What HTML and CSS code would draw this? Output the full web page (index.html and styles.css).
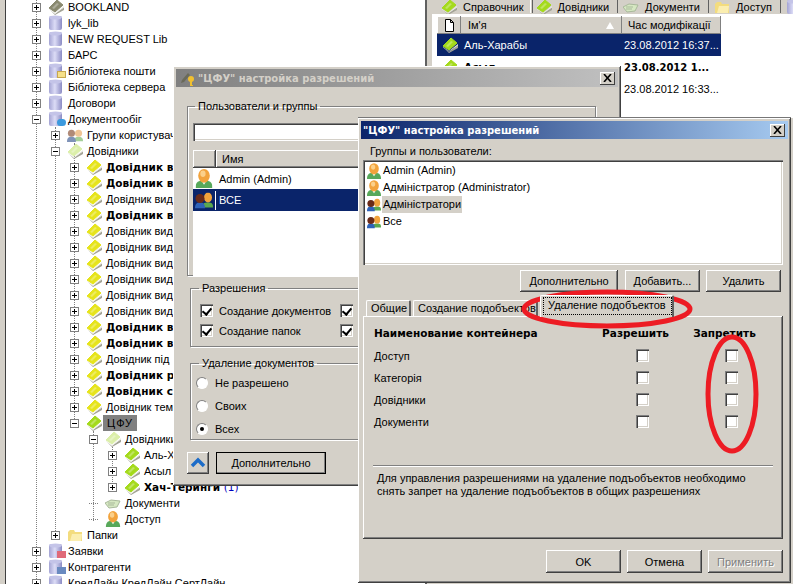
FILE: index.html
```html
<!DOCTYPE html>
<html>
<head>
  <title>ЦФУ настройка разрешений</title>
  <link rel="stylesheet" href="styles.css">
</head>
<body>
  <svg class="sprites" width="0" height="0">
    <defs>
      <linearGradient id="dbFill" x1="0" x2="1" y1="0" y2="0">
        <stop offset="0" stop-color="#a4a4d4"/>
        <stop offset="0.45" stop-color="#dcdcf6"/>
        <stop offset="1" stop-color="#8c8cc4"/>
      </linearGradient>
      <symbol id="book" viewBox="0 0 16 16">
        <path d="M2 11l5 4 9-7v3l-9 5z" fill="#a3a396"/>
        <path d="M1 10l6 4 9-7v1.500l-9 6-6-4z" fill="#ecece4"/>
        <path d="M1 9l8-8 6 5-8 7z" fill="currentColor" stroke="currentColor" stroke-linejoin="round"/>
        <path d="M4 9l5-5 2 1-5 5z" fill="#fff" opacity=".3"/>
      </symbol>
      <symbol id="db" viewBox="0 0 16 16">
        <rect x="1" y="1" width="13" height="14" rx="2" fill="url(#dbFill)"/>
        <ellipse cx="7.500" cy="2.500" rx="6.500" ry="2" fill="#c4c4e8"/>
      </symbol>
      <symbol id="user" viewBox="0 0 16 18">
        <path d="M0 18c0-6 3-7 8-7s8 1 8 7z" fill="#58a85a"/>
        <path d="M5.500 11l2.500 4 2.500-4z" fill="#fff"/>
        <ellipse cx="8" cy="6.500" rx="5.500" ry="6.500" fill="#f2a33c"/>
        <ellipse cx="7" cy="4.500" rx="2.500" ry="3" fill="#fbd08a"/>
      </symbol>
      <symbol id="group" viewBox="0 0 18 16">
        <path d="M7 15c0-4 2-5 6-5s5 1 5 5z" fill="#5aa84e"/>
        <ellipse cx="13" cy="5" rx="4" ry="5" fill="#f2a33c"/>
        <path d="M0 16c0-5 2-6 5-6s5 1 5 6z" fill="#2e62b8"/>
        <circle cx="5" cy="6" r="4.500" fill="#6a2a18"/>
      </symbol>
      <symbol id="people" viewBox="0 0 18 16">
        <path d="M8 15c0-4 2-5 5-5s5 1 5 5z" fill="#a5cf98"/>
        <circle cx="13" cy="6" r="4" fill="#f0c596"/>
        <path d="M0 16c0-5 2-6 5-6s5 1 5 6z" fill="#7f93b8"/>
        <circle cx="5" cy="6" r="4" fill="#b08a78"/>
      </symbol>
      <symbol id="pages" viewBox="0 0 16 16">
        <path d="M0 8l6-3 9 1-3 6-8 1z" fill="#d6e8c2" stroke="#a9b99b"/>
        <path d="M3 8h7M3 10h6" stroke="#a9b99b"/>
      </symbol>
      <symbol id="folder" viewBox="0 0 16 16">
        <path d="M1 14V5l2-2h4l1 2h7v9z" fill="#f3dc7e"/>
        <path d="M3 14l2-7h10l-1 7z" fill="#fbeeb0"/>
      </symbol>
    </defs>
  </svg>

  <div class="desk">
    <div class="left-edge"></div>

    <div class="tree">
      <i class="guide guide-0"></i>
      <i class="guide guide-1"></i>
      <i class="guide guide-2"></i>
      <i class="guide guide-3"></i>
      <i class="guide guide-4"></i>

      <div class="row l0"><span class="exp plus"></span><svg class="ic book-dark"><use href="#book"/></svg><span class="label">BOOKLAND</span></div>
      <div class="row l0"><span class="exp plus"></span><svg class="ic"><use href="#db"/></svg><span class="label">lyk_lib</span></div>
      <div class="row l0"><span class="exp plus"></span><svg class="ic"><use href="#db"/></svg><span class="label">NEW REQUEST Lib</span></div>
      <div class="row l0"><span class="exp plus"></span><svg class="ic"><use href="#db"/></svg><span class="label">БАРС</span></div>
      <div class="row l0"><span class="exp plus"></span><svg class="ic"><use href="#db"/></svg><i class="badge badge-mail"></i><span class="label">Бібліотека пошти</span></div>
      <div class="row l0"><span class="exp plus"></span><svg class="ic"><use href="#db"/></svg><span class="label">Бібліотека сервера</span></div>
      <div class="row l0"><span class="exp plus"></span><svg class="ic"><use href="#db"/></svg><span class="label">Договори</span></div>
      <div class="row l0"><span class="exp minus"></span><svg class="ic"><use href="#db"/></svg><i class="badge badge-blue"></i><span class="label">Документообіг</span></div>
      <div class="row l1"><span class="exp plus"></span><svg class="ic"><use href="#people"/></svg><span class="label">Групи користувачів</span></div>
      <div class="row l1"><span class="exp minus"></span><svg class="ic book-pale"><use href="#book"/></svg><span class="label">Довідники</span></div>
      <div class="row l2"><span class="exp plus"></span><svg class="ic book-yellow"><use href="#book"/></svg><span class="label bold">Довідник видів</span></div>
      <div class="row l2"><span class="exp plus"></span><svg class="ic book-yellow"><use href="#book"/></svg><span class="label bold">Довідник видів</span></div>
      <div class="row l2"><span class="exp plus"></span><svg class="ic book-yellow"><use href="#book"/></svg><span class="label">Довідник видів</span></div>
      <div class="row l2"><span class="exp plus"></span><svg class="ic book-yellow"><use href="#book"/></svg><span class="label bold">Довідник видів</span></div>
      <div class="row l2"><span class="exp plus"></span><svg class="ic book-yellow"><use href="#book"/></svg><span class="label">Довідник видів</span></div>
      <div class="row l2"><span class="exp plus"></span><svg class="ic book-yellow"><use href="#book"/></svg><span class="label">Довідник видів</span></div>
      <div class="row l2"><span class="exp plus"></span><svg class="ic book-yellow"><use href="#book"/></svg><span class="label">Довідник видів</span></div>
      <div class="row l2"><span class="exp plus"></span><svg class="ic book-yellow"><use href="#book"/></svg><span class="label">Довідник видів</span></div>
      <div class="row l2"><span class="exp plus"></span><svg class="ic book-yellow"><use href="#book"/></svg><span class="label">Довідник видів</span></div>
      <div class="row l2"><span class="exp plus"></span><svg class="ic book-yellow"><use href="#book"/></svg><span class="label">Довідник видів</span></div>
      <div class="row l2"><span class="exp plus"></span><svg class="ic book-yellow"><use href="#book"/></svg><span class="label bold">Довідник видів</span></div>
      <div class="row l2"><span class="exp plus"></span><svg class="ic book-yellow"><use href="#book"/></svg><span class="label bold">Довідник видів</span></div>
      <div class="row l2"><span class="exp plus"></span><svg class="ic book-yellow"><use href="#book"/></svg><span class="label">Довідник під</span></div>
      <div class="row l2"><span class="exp plus"></span><svg class="ic book-yellow"><use href="#book"/></svg><span class="label bold">Довідник р</span></div>
      <div class="row l2"><span class="exp plus"></span><svg class="ic book-yellow"><use href="#book"/></svg><span class="label bold">Довідник с</span></div>
      <div class="row l2"><span class="exp plus"></span><svg class="ic book-yellow"><use href="#book"/></svg><span class="label">Довідник тем</span></div>
      <div class="row l2"><span class="exp minus"></span><svg class="ic book-green"><use href="#book"/></svg><span class="label selected">ЦФУ</span></div>
      <div class="row l3"><span class="exp minus"></span><svg class="ic book-pale"><use href="#book"/></svg><span class="label">Довідники</span></div>
      <div class="row l4"><span class="exp plus"></span><svg class="ic book-green"><use href="#book"/></svg><span class="label">Аль-Харабы</span></div>
      <div class="row l4"><span class="exp plus"></span><svg class="ic book-green"><use href="#book"/></svg><span class="label">Асыл</span></div>
      <div class="row l4"><span class="exp plus"></span><svg class="ic book-green"><use href="#book"/></svg><span class="label bold">Хач-Теринги <em class="count">(1)</em></span></div>
      <div class="row l3"><span class="exp none"></span><svg class="ic"><use href="#pages"/></svg><span class="label">Документи</span></div>
      <div class="row l3"><span class="exp none"></span><svg class="ic"><use href="#user"/></svg><span class="label">Доступ</span></div>
      <div class="row l1"><span class="exp plus"></span><svg class="ic"><use href="#folder"/></svg><span class="label">Папки</span></div>
      <div class="row l0"><span class="exp plus"></span><svg class="ic"><use href="#db"/></svg><i class="badge badge-red"></i><span class="label">Заявки</span></div>
      <div class="row l0"><span class="exp plus"></span><svg class="ic"><use href="#db"/></svg><i class="badge badge-table"></i><span class="label">Контрагенти</span></div>
      <div class="row l0"><span class="exp plus"></span><svg class="ic"><use href="#db"/></svg><span class="label">КредЛайн КредЛайн СертЛайн</span></div>
    </div>

    <div class="pane">
      <div class="pane-tabs">
        <div class="pane-tab"><svg class="ic book-green"><use href="#book"/></svg>Справочник</div>
        <div class="pane-tab current"><svg class="ic book-green"><use href="#book"/></svg>Довідники</div>
        <div class="pane-tab"><svg class="ic"><use href="#pages"/></svg>Документи</div>
        <div class="pane-tab"><svg class="ic"><use href="#folder"/></svg>Доступ</div>
        <div class="pane-tab"><svg class="ic"><use href="#db"/></svg></div>
      </div>
      <div class="doc-box">
        <div class="doc-head">
          <div class="doc-col-icon">
            <svg class="page-icon" viewBox="0 0 11 13"><path d="M1.500.500h5l3 3v9h-8zM6.500.500v3h3" fill="#fff" stroke="#000"/></svg>
          </div>
          <div class="doc-col-name">Ім'я<i class="sort-arrow"></i></div>
          <div class="doc-col-date">Час модифікації</div>
        </div>
        <div class="doc-row current"><svg class="ic book-green"><use href="#book"/></svg><span class="doc-name">Аль-Харабы</span><span class="doc-date">23.08.2012 16:37...</span></div>
        <div class="doc-row"><svg class="ic book-green"><use href="#book"/></svg><span class="doc-name bold">Асыл</span><span class="doc-date bold">23.08.2012 1...</span></div>
        <div class="doc-row"><svg class="ic book-green"><use href="#book"/></svg><span class="doc-name">Хач-Теринги</span><span class="doc-date">23.08.2012 16:33...</span></div>
      </div>
    </div>
  </div>

  <!-- back dialog -->
  <div class="win win-back">
    <div class="title inactive">
      <svg class="title-icon" viewBox="0 0 14 16"><path d="M1 10l6-7 2 2-6 7-3 1z" fill="#6a6a5a"/><circle cx="10" cy="9" r="3" fill="#f0c030"/><path d="M10 11v5h2" stroke="#f0c030" stroke-width="2" fill="none"/></svg>
      <span>"ЦФУ" настройка разрешений</span>
      <span class="close"><svg viewBox="0 0 9 8"><path d="M1 0l7 8M8 0L1 8" stroke="#000" stroke-width="1.600"/></svg></span>
    </div>
    <fieldset class="group group-users">
      <legend>Пользователи и группы</legend>
      <div class="user-search">
        <div class="sunken search-input"></div>
        <div class="raised search-btn"></div>
      </div>
      <div class="user-table">
        <div class="table-head"><span class="raised head-icon"></span><span class="raised head-name">Имя</span></div>
        <div class="table-row"><span class="row-icon"><svg viewBox="0 0 16 18"><use href="#user"/></svg></span><span>Admin (Admin)</span></div>
        <div class="table-row current"><span class="row-icon"><svg viewBox="0 0 18 16"><use href="#group"/></svg></span><span>ВСЕ</span></div>
      </div>
    </fieldset>
    <fieldset class="group group-perms">
      <legend>Разрешения</legend>
      <div class="perm-row"><i class="check on"></i><span class="perm-label">Создание документов</span><i class="check on"></i></div>
      <div class="perm-row"><i class="check on"></i><span class="perm-label">Создание папок</span><i class="check on"></i></div>
    </fieldset>
    <fieldset class="group group-delete">
      <legend>Удаление документов</legend>
      <div class="radio-row"><i class="radio"></i>Не разрешено</div>
      <div class="radio-row"><i class="radio"></i>Своих</div>
      <div class="radio-row"><i class="radio on"></i>Всех</div>
    </fieldset>
    <div class="back-footer">
      <div class="raised up-btn"><svg viewBox="0 0 22 22"><path d="M5 14l6-6 6 6" fill="none" stroke="#1c6cc8" stroke-width="3.500"/></svg></div>
      <div class="raised btn default-btn">Дополнительно</div>
    </div>
  </div>

  <!-- front dialog -->
  <div class="win win-front">
    <div class="title">
      <span>"ЦФУ" настройка разрешений</span>
      <span class="close"><svg viewBox="0 0 9 8"><path d="M1 0l7 8M8 0L1 8" stroke="#000" stroke-width="1.600"/></svg></span>
    </div>
    <div class="front-body">
      <div class="list-caption">Группы и пользователи:</div>
      <div class="sunken principal-list">
        <div class="principal"><svg class="ic-small"><use href="#user"/></svg><span>Admin (Admin)</span></div>
        <div class="principal"><svg class="ic-small"><use href="#user"/></svg><span>Адміністратор (Administrator)</span></div>
        <div class="principal active"><svg class="ic-small"><use href="#group"/></svg><span>Адміністратори</span></div>
        <div class="principal"><svg class="ic-small"><use href="#group"/></svg><span>Все</span></div>
      </div>
      <div class="list-actions">
        <div class="raised btn btn-more">Дополнительно</div>
        <div class="raised btn btn-add">Добавить...</div>
        <div class="raised btn btn-del">Удалить</div>
      </div>
      <div class="tabs">
        <div class="tab tab-general">Общие</div>
        <div class="tab tab-create">Создание подобъектов</div>
        <div class="tab tab-delete"><span class="focus">Удаление подобъектов</span></div>
      </div>
      <div class="tab-panel">
        <div class="perm-grid">
          <div class="grid-head grid-name">Наименование контейнера</div>
          <div class="grid-head">Разрешить</div>
          <div class="grid-head">Запретить</div>
          <div class="grid-name">Доступ</div><i class="check"></i><i class="check"></i>
          <div class="grid-name">Категорія</div><i class="check"></i><i class="check"></i>
          <div class="grid-name">Довідники</div><i class="check"></i><i class="check"></i>
          <div class="grid-name">Документи</div><i class="check"></i><i class="check"></i>
        </div>
        <div class="rule"></div>
        <p class="hint">Для управления разрешениями на удаление подъобъектов необходимо<br>снять запрет на удаление подъобъектов в общих разрешениях</p>
      </div>
      <div class="front-footer">
        <div class="raised btn">OK</div>
        <div class="raised btn">Отмена</div>
        <div class="raised btn disabled">Применить</div>
      </div>
    </div>
  </div>

  <!-- red marker drawn over the screenshot -->
  <svg class="marker" viewBox="0 0 793 584">
    <ellipse cx="607" cy="309" rx="83" ry="17" />
    <ellipse cx="732" cy="394" rx="24" ry="57" />
  </svg>
</body>
</html>
```

FILE: styles.css
```css
* {
  box-sizing: border-box;
}
html, body {
  margin: 0;
  height: 100%;
}
body {
  width: 793px;
  height: 584px;
  overflow: hidden;
  position: relative;
  background-color: #fff;
  color: #000;
  font-family: "Liberation Sans", Arial, sans-serif;
  font-size: 11px;
}
.sprites {
  position: absolute;
}
.bold {
  font-family: "DejaVu Sans", sans-serif;
  font-size: 10.500px;
  font-weight: bold;
}

/* bevels */
.raised {
  background-color: #d4d0c8;
  box-shadow: inset -1px -1px #404040, inset 1px 1px #fff, inset -2px -2px #808080, inset 2px 2px #d4d0c8;
}
.sunken {
  background-color: #fff;
  box-shadow: inset 1px 1px #808080, inset 2px 2px #404040, inset -1px -1px #fff, inset -2px -2px #d4d0c8;
}

/* main window under the dialogs */
.desk {
  display: flex;
  height: 584px;
}
.left-edge {
  width: 6px;
  flex: none;
  background-color: #d4d0c8;
  border-right: 1px solid #404040;
}
.tree {
  width: 419px;
  flex: none;
  position: relative;
  margin-top: -1px;
  overflow: hidden;
}
.guide {
  position: absolute;
  width: 0;
  border-left: 1px dotted #808080;
}
.guide-0 { left: 30px; top: 0; height: 590px; }
.guide-1 { left: 49px; top: 128px; height: 410px; }
.guide-2 { left: 68px; top: 144px; height: 280px; }
.guide-3 { left: 87px; top: 432px; height: 90px; }
.guide-4 { left: 106px; top: 448px; height: 41px; }

.row {
  display: flex;
  align-items: center;
  height: 16px;
  position: relative;
  white-space: nowrap;
}
.l0 { padding-left: 26px; }
.l1 { padding-left: 45px; }
.l2 { padding-left: 64px; }
.l3 { padding-left: 83px; }
.l4 { padding-left: 102px; }

.exp {
  width: 9px;
  height: 9px;
  flex: none;
  position: relative;
  margin-right: 7px;
  background-color: #fff;
  border: 1px solid #808080;
}
.exp::before {
  content: "";
  position: absolute;
  left: 1px;
  top: 3px;
  width: 5px;
  height: 1px;
  background-color: #000;
}
.exp.plus::after {
  content: "";
  position: absolute;
  left: 3px;
  top: 1px;
  width: 1px;
  height: 5px;
  background-color: #000;
}
.exp.none {
  height: 0;
  background: none;
  border: none;
  border-bottom: 1px dotted #808080;
}
.exp.none::before {
  display: none;
}
.ic {
  width: 16px;
  height: 16px;
  flex: none;
}
.book-yellow { color: #e6e41c; }
.book-green { color: #a4da1c; }
.book-pale { color: #dcefaa; }
.book-dark { color: #8a8a70; }
.badge {
  position: absolute;
  width: 9px;
  height: 7px;
  margin-left: 25px;
  top: 8px;
}
.badge-mail { background-color: #f6e08a; border: 1px solid #c8a850; }
.badge-blue { background-color: #3c9ade; border-radius: 4px; }
.badge-red { background-color: #e06a78; }
.badge-table { background-color: #6a8ac0; }
.label {
  margin-left: 4px;
  line-height: 16px;
}
.label.selected {
  margin-left: 1px;
  padding: 0 4px;
  background-color: #808080;
  letter-spacing: 1px;
}
.count {
  color: #0000c0;
  font-style: normal;
  font-weight: normal;
}

/* right pane with its tabs and list */
.pane {
  flex: 1;
  display: flex;
  flex-direction: column;
  background-color: #d4d0c8;
  border-left: 2px solid #606060;
  padding-left: 5px;
}
.pane-tabs {
  display: flex;
  height: 14px;
  overflow: hidden;
  padding-left: 4px;
}
.pane-tab {
  display: flex;
  align-items: center;
  gap: 6px;
  height: 13px;
  padding: 0 8px 0 5px;
  border-right: 1px solid #606060;
  white-space: nowrap;
}
.pane-tab.current {
  margin-left: -3px;
  border-left: 1px solid #fff;
}
.doc-box {
  height: 104px;
  padding: 1px 0 0 4px;
  background-color: #fff;
  border-top: 1px solid #fff;
  border-left: 1px solid #fff;
}
.doc-head {
  display: flex;
  width: 284px;
  height: 18px;
  line-height: 18px;
  background-color: #d4d0c8;
  box-shadow: inset -1px -1px #808080, inset 1px 1px #fff;
}
.doc-col-icon {
  width: 24px;
  padding: 3px 0 0 7px;
  border-right: 1px solid #808080;
}
.page-icon {
  display: block;
  width: 11px;
  height: 13px;
}
.doc-col-name {
  width: 161px;
  padding-left: 7px;
  position: relative;
  border-right: 1px solid #808080;
}
.sort-arrow {
  position: absolute;
  right: 7px;
  top: 6px;
  border-left: 4px solid transparent;
  border-right: 4px solid transparent;
  border-bottom: 7px solid #fff;
}
.doc-col-date {
  padding-left: 6px;
}
.doc-row {
  display: flex;
  align-items: center;
  width: 284px;
  height: 22px;
  padding-left: 5px;
  white-space: nowrap;
}
.doc-row.current {
  background-color: #0a246a;
  color: #fff;
}
.doc-name {
  width: 160px;
  margin-left: 6px;
}
.doc-date.bold {
  font-size: 10px;
}

/* dialogs */
.win {
  position: absolute;
  background-color: #d4d0c8;
  padding: 3px;
  box-shadow: inset -1px -1px #404040, inset 1px 1px #fff, inset -2px -2px #808080;
}
.win-back {
  left: 173px;
  top: 66px;
  width: 448px;
  height: 420px;
}
.win-front {
  left: 358px;
  top: 118px;
  width: 433px;
  height: 465px;
  box-shadow: inset -1px -1px #404040, inset 1px 1px #fff, inset -2px -2px #808080, 0 -1px #777;
}
.title {
  display: flex;
  align-items: center;
  height: 18px;
  padding: 0 3px 0 2px;
  background: linear-gradient(to right, #0a246a, #a6caf0);
  color: #fff;
  font-family: "DejaVu Sans", sans-serif;
  font-size: 10px;
  font-weight: bold;
  white-space: nowrap;
}
.title.inactive {
  background: linear-gradient(to right, #808080, #c0c0c0);
  color: #d4d0c8;
}
.title-icon {
  width: 14px;
  height: 16px;
  margin: 0 3px;
}
.close {
  margin-left: auto;
  width: 15px;
  height: 13px;
  padding: 2px 3px;
  background-color: #d4d0c8;
  box-shadow: inset -1px -1px #404040, inset 1px 1px #fff;
}
.close svg {
  display: block;
  width: 9px;
  height: 8px;
}

.group {
  margin: 0;
  min-width: 0;
  border: 1px solid #808080;
  box-shadow: inset 1px 1px #fff, 1px 1px #fff;
  line-height: 14px;
}
.group legend {
  padding: 0 3px;
  line-height: 14px;
}
.group-users {
  width: 409px;
  height: 177px;
  margin: 12px 0 0 11px;
  padding: 6px 5px 0;
}
.group-users legend {
  margin-left: 2px;
}
.user-search {
  display: flex;
  align-items: flex-end;
  height: 24px;
  margin-top: -2px;
}
.search-input {
  flex: 1;
  height: 18px;
}
.search-btn {
  width: 27px;
  height: 23px;
}
.user-table {
  width: 395px;
  height: 126px;
  margin-top: 9px;
  background-color: #fff;
}
.table-head {
  display: flex;
  height: 18px;
  line-height: 18px;
}
.head-icon {
  width: 23px;
}
.head-name {
  flex: 1;
  padding-left: 6px;
}
.table-row {
  display: flex;
  align-items: center;
  height: 21px;
}
.table-row.current {
  height: 22px;
  background-color: #0a246a;
  color: #fff;
}
.row-icon {
  display: flex;
  justify-content: center;
  width: 23px;
  margin-right: 3px;
  border-right: 1px solid #fff;
}
.row-icon svg {
  width: 18px;
  height: 19px;
}
.group-perms {
  width: 405px;
  height: 66px;
  margin: 5px 0 0 14px;
  padding: 9px 9px 0;
}
.group-perms legend {
  margin-left: -1px;
}
.perm-row {
  display: flex;
  align-items: center;
  gap: 6px;
  height: 13px;
  margin-bottom: 7px;
}
.perm-label {
  width: 115px;
  white-space: nowrap;
}
.check {
  display: block;
  position: relative;
  width: 13px;
  height: 13px;
  flex: none;
  background-color: #fff;
  box-shadow: inset 1px 1px #808080, inset 2px 2px #404040, inset -1px -1px #fff, inset -2px -2px #d4d0c8;
}
.check.on::after {
  content: "";
  position: absolute;
  left: 4px;
  top: 2px;
  width: 4px;
  height: 7px;
  border-right: 2px solid #000;
  border-bottom: 2px solid #000;
  transform: rotate(40deg);
}
.group-delete {
  width: 405px;
  height: 84px;
  margin: 9px 0 0 14px;
  padding: 1px 5px 0;
}
.group-delete legend {
  margin-left: 3px;
}
.radio-row {
  display: flex;
  align-items: center;
  gap: 7px;
  height: 23px;
}
.radio {
  position: relative;
  width: 12px;
  height: 12px;
  border-radius: 50%;
  background-color: #fff;
  border: 1px solid;
  border-color: #808080 #fff #fff #808080;
}
.radio.on::after {
  content: "";
  position: absolute;
  left: 3px;
  top: 3px;
  width: 4px;
  height: 4px;
  border-radius: 50%;
  background-color: #000;
}
.back-footer {
  display: flex;
  gap: 7px;
  margin: 12px 0 0 11px;
}
.up-btn {
  width: 22px;
  height: 22px;
}
.up-btn svg {
  display: block;
}
.btn {
  display: flex;
  align-items: center;
  justify-content: center;
  width: 75px;
  height: 23px;
  white-space: nowrap;
}
.default-btn {
  width: 110px;
  height: 22px;
  outline: 1px solid #000;
  outline-offset: -1px;
}

/* front dialog body */
.front-body {
  padding: 5px 5px 0 2px;
}
.list-caption {
  height: 14px;
  line-height: 14px;
  margin-left: 7px;
}
.principal-list {
  height: 105px;
  margin-top: 2px;
  padding: 2px 0 0 4px;
}
.principal {
  display: flex;
  align-items: center;
  height: 17px;
}
.ic-small {
  width: 14px;
  height: 16px;
  flex: none;
}
.principal span {
  margin-left: 1px;
  padding: 0 1px;
  line-height: 17px;
}
.principal.active span {
  background-color: #d4d0c8;
}
.list-actions {
  display: flex;
  justify-content: flex-end;
  gap: 6px;
  margin: 5px 2px 0 0;
}
.list-actions .btn {
  height: 22px;
}
.btn-more {
  width: 98px;
  margin-right: 1px;
}
.tabs {
  display: flex;
  align-items: flex-end;
  gap: 2px;
  height: 21px;
  margin: 3px 0 0 3px;
  position: relative;
}
.tab {
  height: 16px;
  line-height: 15px;
  padding-left: 4px;
  white-space: nowrap;
  overflow: hidden;
  border-top: 1px solid #fff;
  border-left: 1px solid #fff;
  border-right: 2px solid #606060;
  border-radius: 2px 2px 0 0;
}
.tab-general { width: 45px; }
.tab-create { width: 125px; }
.tab-delete {
  width: 134px;
  height: 22px;
  margin-bottom: -1px;
  padding: 1px 0 0 2px;
  position: relative;
  z-index: 1;
  background-color: #d4d0c8;
}
.focus {
  display: block;
  height: 18px;
  padding: 0 4px;
  line-height: 15px;
  border: 1px dotted #000;
}
.tab-panel {
  width: 420px;
  height: 223px;
  padding: 6px 0 0 11px;
  box-shadow: inset -1px -1px #404040, inset 1px 1px #fff, inset -2px -2px #808080;
}
.perm-grid {
  display: grid;
  grid-template-columns: 224px 89px 89px;
  grid-auto-rows: 22px;
  align-items: center;
  justify-items: center;
}
.grid-name {
  justify-self: start;
  padding-top: 2px;
}
.grid-head {
  margin-right: 14px;
  padding-top: 0;
  font-family: "DejaVu Sans", sans-serif;
  font-size: 10.500px;
  font-weight: bold;
  white-space: nowrap;
}
.rule {
  width: 400px;
  height: 2px;
  margin: 33px 0 0 -1px;
  background-color: #808080;
  border-bottom: 1px solid #fff;
}
.hint {
  margin: 5px 0 0 3px;
  line-height: 13px;
  white-space: nowrap;
}
.front-footer {
  display: flex;
  justify-content: flex-end;
  gap: 6px;
  width: 420px;
  margin-top: 11px;
}
.disabled {
  color: #808080;
  text-shadow: 1px 1px #fff;
}

.marker {
  position: absolute;
  left: 0;
  top: 0;
  width: 793px;
  height: 584px;
  pointer-events: none;
}
.marker ellipse {
  fill: none;
  stroke: #ed1c24;
  stroke-width: 5;
}
```
